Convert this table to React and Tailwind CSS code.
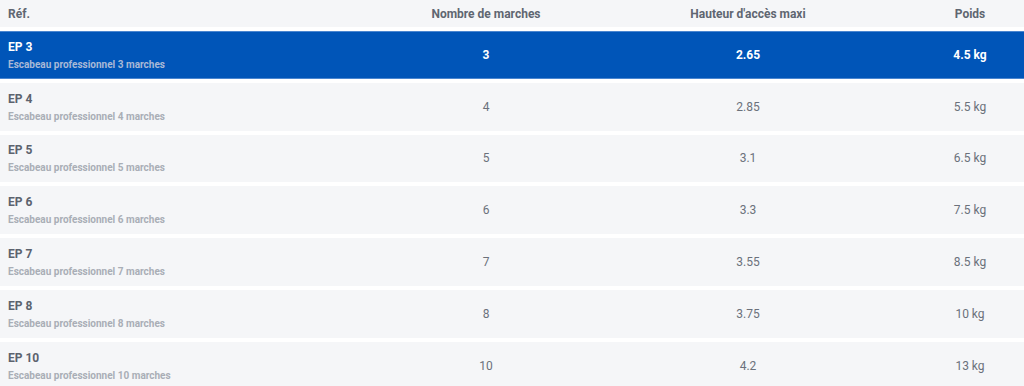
import React from 'react';

const rows = [
  { ref: 'EP 3', steps: 3, height: '2.65', weight: '4.5 kg' },
  { ref: 'EP 4', steps: 4, height: '2.85', weight: '5.5 kg' },
  { ref: 'EP 5', steps: 5, height: '3.1', weight: '6.5 kg' },
  { ref: 'EP 6', steps: 6, height: '3.3', weight: '7.5 kg' },
  { ref: 'EP 7', steps: 7, height: '3.55', weight: '8.5 kg' },
  { ref: 'EP 8', steps: 8, height: '3.75', weight: '10 kg' },
  { ref: 'EP 10', steps: 10, height: '4.2', weight: '13 kg' },
];

const cols = 'grid grid-cols-[392px_188px_336px_108px]';

const App = () => {
  return (
    <div className="w-[1024px] h-[386px] overflow-hidden bg-white font-['Roboto',sans-serif] flex flex-col gap-1">
      <div className={`${cols} h-[27px] shrink-0 items-center bg-[#f5f6f8] text-[12px] font-bold text-[#5f6671]`}>
        <div className="pl-2">Réf.</div>
        <div className="text-center">Nombre de marches</div>
        <div className="text-center">Hauteur d'accès maxi</div>
        <div className="text-center">Poids</div>
      </div>

      {rows.map((r, i) => {
        const active = i === 0;
        return (
          <div
            key={r.ref}
            className={`${cols} h-[47.8px] shrink-0 items-center ${
              active
                ? 'bg-[#0055b8] border-y border-[#4a86d0] text-white'
                : 'bg-[#f5f6f8] text-[#6b717b]'
            }`}
          >
            <div className="pl-2 flex flex-col">
              <span className={`text-[12px] font-bold leading-[16px] ${active ? 'text-white' : 'text-[#5c636e]'}`}>
                {r.ref}
              </span>
              <span className={`mt-[3px] text-[10px] font-bold leading-[13px] ${active ? 'text-[#a9b9d6]' : 'text-[#a9aeb6]'}`}>
                Escabeau professionnel {r.steps} marches
              </span>
            </div>
            <div className={`text-center text-[12px] ${active ? 'font-bold' : ''}`}>{r.steps}</div>
            <div className={`text-center text-[12px] ${active ? 'font-bold' : ''}`}>{r.height}</div>
            <div className={`text-center text-[12px] ${active ? 'font-bold' : ''}`}>{r.weight}</div>
          </div>
        );
      })}
    </div>
  );
};

export default App;
